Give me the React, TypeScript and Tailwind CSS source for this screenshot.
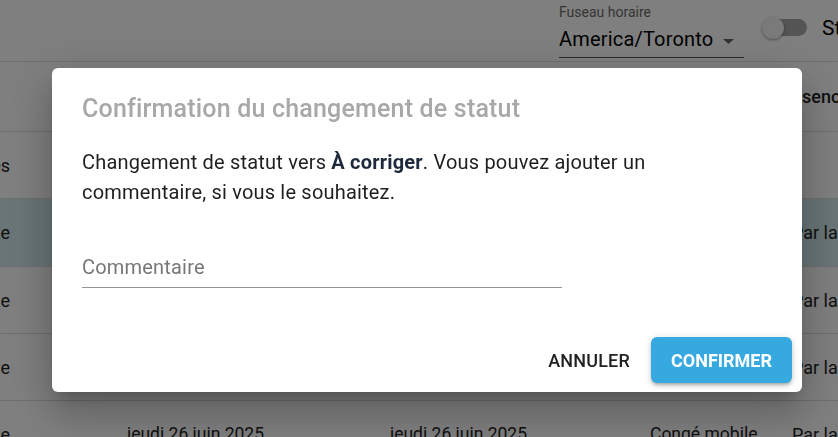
import React from 'react';

const rows = [
  { left: 'Absences', dates: ['', ''], type: '', right: '', h: 'h-[67px]', highlight: false },
  { left: 'En attente', dates: ['', ''], type: '', right: 'Par la gestion', h: 'h-[68px]', highlight: true },
  { left: 'En attente', dates: ['', ''], type: '', right: 'Par la gestion', h: 'h-[67px]', highlight: false },
  { left: 'En attente', dates: ['', ''], type: '', right: 'Par la gestion', h: 'h-[67px]', highlight: false },
  { left: 'En attente', dates: ['jeudi 26 juin 2025', 'jeudi 26 juin 2025'], type: 'Congé mobile', right: 'Par la gestion', h: 'h-[67px]', highlight: false },
];

const Switch = () => (
  <div className="relative w-[45px] h-[24px] shrink-0">
    <div className="absolute left-[4px] top-[3px] w-[41px] h-[17px] rounded-full bg-[#a8a8a8]" />
    {/* thumb */}
    <div className="absolute left-0 top-[1px] w-[22px] h-[22px] rounded-full bg-[#f5f5f5] shadow-[0_1px_3px_rgba(0,0,0,0.4)]" />
  </div>
);

const Page = () => (
  <div className="text-[#222]">
    {/* top bar */}
    <div className="h-[62px] border-b border-[#dcdcdc] flex items-start overflow-hidden">
      <div className="ml-[559px] w-[185px] shrink-0 pt-[4px] border-b border-[#555] h-[58px] flex flex-col">
        <span className="text-[14px] leading-[16px] text-[#6b6b6b]">Fuseau horaire</span>
        <div className="flex items-center justify-between pr-[10px] mt-[5px]">
          <span className="text-[20px] leading-[28px] tracking-[0.19px] text-black whitespace-nowrap">America/Toronto</span>
          <svg width="11" height="5" viewBox="0 0 11 5" className="mt-[4px] shrink-0">
            <path d="M0 0 L11 0 L5.5 5 Z" fill="#666" />
          </svg>
        </div>
      </div>
      <div className="ml-[18px] mt-[16px] shrink-0">
        <Switch />
      </div>
      <span className="ml-[15px] mt-[14px] text-[21px] leading-[28px] text-black whitespace-nowrap shrink-0">Statut</span>
    </div>
    {/* column header row */}
    <div className="h-[70px] border-b border-[#dcdcdc] flex items-center">
      <div className="ml-[780px] whitespace-nowrap text-[18px] font-medium shrink-0">Absence</div>
    </div>
    {rows.map((r, i) => (
      <div
        key={i}
        className={`${r.h} border-b border-[#dcdcdc] flex items-center text-[17.5px] whitespace-nowrap overflow-hidden ${r.highlight ? 'bg-[#d3eaee]' : ''}`}
      >
        <div className="w-[10px] overflow-hidden flex justify-end shrink-0 text-[18px]">
          <span>{r.left}</span>
        </div>
        <div className="ml-[117px] w-[263px] shrink-0">{r.dates[0]}</div>
        <div className="w-[260px] shrink-0">{r.dates[1]}</div>
        <div className="w-[142px] shrink-0">{r.type}</div>
        <div className="shrink-0 text-[18px]">{r.right}</div>
      </div>
    ))}
  </div>
);

export default function App() {
  return (
    <div className="relative w-screen h-screen overflow-hidden bg-white" style={{ fontFamily: 'Roboto, "Liberation Sans", sans-serif' }}>
      <Page />
      {/* backdrop */}
      <div className="fixed inset-0 bg-black/50">
        <div className="ml-[52px] mt-[68px] w-[750px] bg-white rounded-md shadow-[0px_11px_15px_-7px_rgba(0,0,0,0.2),0px_24px_38px_3px_rgba(0,0,0,0.14),0px_9px_46px_8px_rgba(0,0,0,0.12)] pl-[30px] pr-[10px] pt-[27px] pb-[9px] flex flex-col">
          <h2 className="text-[25px] leading-[28px] font-medium tracking-[0.19px] text-[#a8a8a8]">
            Confirmation du changement de statut
          </h2>
          <p className="mt-[24px] pr-[60px] text-[20px] leading-[30px] tracking-[0.19px] text-[#1f1f1f]">
            Changement de statut vers <strong className="font-bold text-[#1e293b]">À corriger</strong>. Vous pouvez ajouter un commentaire, si vous le souhaitez.
          </p>
          <div className="mt-[40px] w-[480px] h-[41px] border-b border-[#949494] flex items-center">
            <span className="text-[20px] leading-[28px] tracking-[0.19px] text-[#777]">Commentaire</span>
          </div>
          <div className="mt-[49px] flex justify-end items-center">
            <button className="h-[46px] px-[16px] text-[18px] font-medium text-[#222] tracking-[0.2px]">ANNULER</button>
            <button className="ml-[5px] h-[46px] px-[20px] rounded-md bg-[#36a9e0] text-white text-[18px] font-bold shadow-[0_3px_3px_-2px_rgba(0,0,0,0.2),0_3px_4px_0_rgba(0,0,0,0.14),0_1px_8px_0_rgba(0,0,0,0.12)]">
              CONFIRMER
            </button>
          </div>
        </div>
      </div>
    </div>
  );
}
